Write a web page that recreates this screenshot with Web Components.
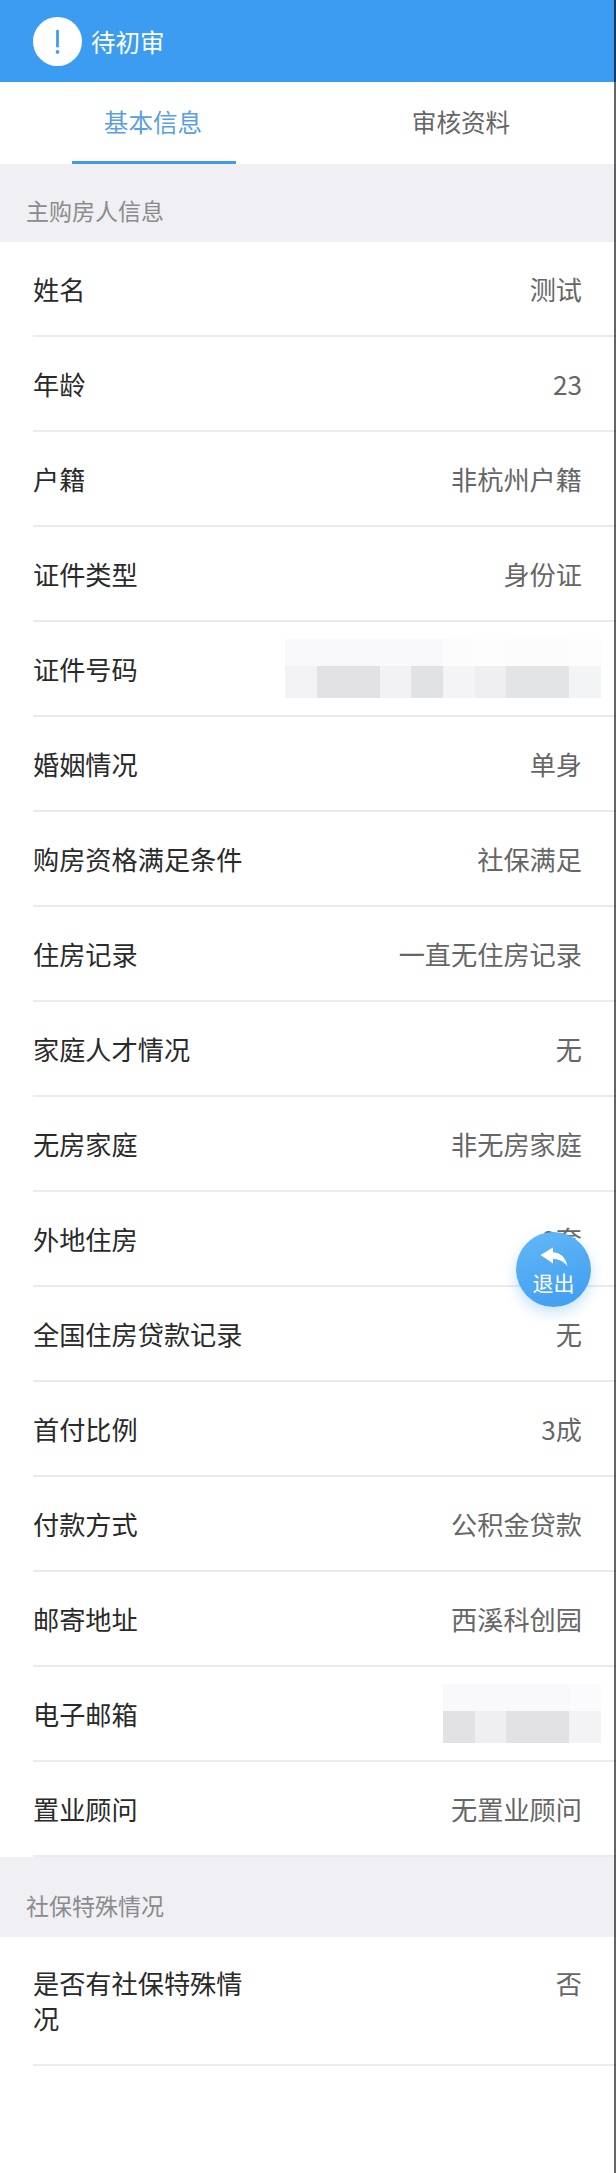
<!DOCTYPE html>
<html lang="zh-CN"><head><meta charset="utf-8">
<style>
html,body{margin:0;padding:0;background:#fff}
body{width:616px;height:2173px;overflow:hidden;font-family:"Noto Sans CJK SC","Noto Sans",sans-serif}
</style></head><body>
<audit-page>
  <status-bar slot="status">待初审</status-bar>
  <tab-bar slot="tabs"><tab-item active>基本信息</tab-item><tab-item>审核资料</tab-item></tab-bar>
  <section-head>主购房人信息</section-head>
  <info-row label="姓名">测试</info-row>
  <info-row label="年龄">23</info-row>
  <info-row label="户籍">非杭州户籍</info-row>
  <info-row label="证件类型">身份证</info-row>
  <info-row label="证件号码"><mosaic-patch cols="#f3f3f5,#e2e2e4,#e2e2e4,#f2f2f4,#e1e2e4,#f4f4f6,#efeff1,#e3e4e6,#e3e4e6,#f3f4f6" top="#f9f9fb,#f9f9fb,#f9f9fb,#f9f9fb,#f9f9fb,#fcfcfd,#fdfdfe,#fcfcfd,#fcfcfd,#fdfdfe" style="--mb:3px"></mosaic-patch></info-row>
  <info-row label="婚姻情况">单身</info-row>
  <info-row label="购房资格满足条件">社保满足</info-row>
  <info-row label="住房记录">一直无住房记录</info-row>
  <info-row label="家庭人才情况">无</info-row>
  <info-row label="无房家庭">非无房家庭</info-row>
  <info-row label="外地住房">0套</info-row>
  <info-row label="全国住房贷款记录">无</info-row>
  <info-row label="首付比例">3成</info-row>
  <info-row label="付款方式">公积金贷款</info-row>
  <info-row label="邮寄地址">西溪科创园</info-row>
  <info-row label="电子邮箱"><mosaic-patch cols="#e2e2e4,#efeff1,#e2e2e4,#e2e2e4,#f3f3f5" top="#f9f9fb,#f9f9fb,#f9f9fb,#f9f9fb,#fbfbfd" style="--mb:3px"></mosaic-patch></info-row>
  <info-row label="置业顾问">无置业顾问</info-row>
  <section-head class="s2">社保特殊情况</section-head>
  <info-row label="是否有社保特殊情况" top>否</info-row>
  <exit-fab slot="fab">退出</exit-fab>
</audit-page>
<script>
function def(name,css,html,init){
  customElements.define(name,class extends HTMLElement{
    constructor(){super();const r=this.attachShadow({mode:'open'});r.innerHTML='<style>'+css+'</style>'+html;}
    connectedCallback(){if(init)init(this,this.shadowRoot);}
  });
}
def('audit-page',`:host{display:block;position:relative;width:616px;height:2173px;background:#fff;overflow:hidden}
 .edge{position:absolute;top:0;right:0;bottom:0;width:2px;background:rgba(0,0,0,.6)}`,
 `<slot name="status"></slot><slot name="tabs"></slot><slot></slot><slot name="fab"></slot><div class="edge"></div>`);
def('status-bar',`:host{display:flex;align-items:center;height:82px;background:#3b9cf1;color:#fff;font-size:24.5px;padding-left:33px;box-sizing:border-box}
 svg{width:49px;height:49px;margin-right:9px;flex:none}`,
 `<svg viewBox="0 0 50 50"><circle cx="25" cy="25" r="25" fill="#fff"/><rect x="23.6" y="13" width="2.8" height="18" rx="1.2" fill="#3b9cf1"/><circle cx="25" cy="35.6" r="1.9" fill="#3b9cf1"/></svg><slot></slot>`);
def('tab-bar',`:host{display:flex;height:82px;background:#fff}`,`<slot></slot>`);
def('tab-item',`:host{flex:1;display:flex;justify-content:center;align-items:center;font-size:24.6px;color:#666;padding:0 2px 4px 0;box-sizing:border-box;position:relative}
 :host([active]){color:#5a9fe2}
 i{display:none;position:absolute;left:72px;right:72px;bottom:0;height:3px;background:#3f9bec}
 :host([active]) i{display:block}`,`<slot></slot><i></i>`);
def('section-head',`:host{display:flex;align-items:center;box-sizing:border-box;height:78px;padding:14px 0 0 26px;background:#efeff4;color:#8b8b8b;font-size:23px}
 :host(.s2){height:80px;padding-top:15px}`,`<slot></slot>`);
def('info-row',`:host{display:block;padding-left:33px;background:#fff;font-size:26.2px;line-height:35px}
 .r{display:flex;justify-content:space-between;align-items:center;box-sizing:border-box;min-height:95px;padding:2px 34px 0 0;border-bottom:2px solid #ebebeb}
 :host([top]) .r{align-items:flex-start;padding-top:29px;padding-bottom:28px;}
 .l{color:#2a2a2a;width:214px;flex:none}
 .v{color:#666;text-align:right}`,
 `<div class="r"><div class="l"></div><div class="v"><slot></slot></div></div>`,
 (el,r)=>{r.querySelector('.l').textContent=el.getAttribute('label');});
def('mosaic-patch',`:host{display:block;margin:0 -19px var(--mb,0) 0}
 .g{display:grid;grid-auto-columns:31.6px;grid-template-rows:27px 32px;grid-auto-flow:column}`,`<div class="g"></div>`,
 (el,r)=>{const g=r.querySelector('.g');const c=el.getAttribute('cols').split(','),t=el.getAttribute('top').split(',');
  let h='';c.forEach((x,i)=>{h+='<div style="background:'+t[i]+'"></div><div style="background:'+x+'"></div>';});g.innerHTML=h;});
def('exit-fab',`:host{position:absolute;left:516px;top:1232px;width:75px;height:75px;border-radius:50%;background:linear-gradient(160deg,#63b8f6,#3e9cf0);box-shadow:0 6px 14px rgba(70,160,240,.3);color:#fff;font-size:21px;display:flex;flex-direction:column;align-items:center;justify-content:flex-start;line-height:24px}
 svg{width:28px;height:20px;margin-top:15px;margin-bottom:3px;flex:none}`,
 `<svg viewBox="0 0 28 20"><path d="M0.5 8 L13 0.5 V5.2 C21 5.6 26 11 27.5 19.5 C23.5 14 19 12 13 12 V16.5 Z" fill="#fff"/></svg><slot></slot>`);
</script>
</body></html>
